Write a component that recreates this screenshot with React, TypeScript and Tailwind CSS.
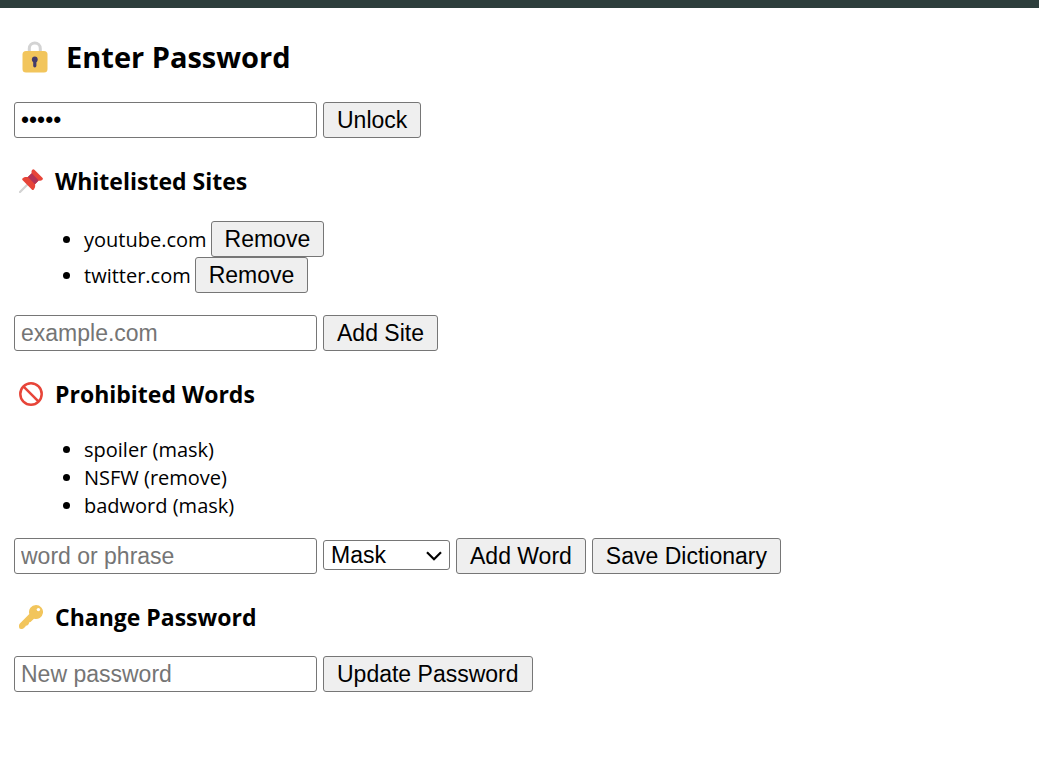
import { useState, type ComponentProps, type ReactNode } from 'react';

function LockIcon() {
  return (
    <svg viewBox="0 0 26 32" className="h-8 w-[26px]" aria-hidden="true">
      <path d="M7.300 12V7.500a5.500 5.500 0 0 1 11 0V12" fill="none" stroke="#d3d3d3" strokeWidth="3" />
      <rect x="0.500" y="10" width="25" height="21.500" rx="3.500" fill="#f2c55c" />
      <circle cx="12.800" cy="18.500" r="2.900" fill="#433b6b" />
      <path d="M12.800 19v5.800" stroke="#433b6b" strokeWidth="3.200" strokeLinecap="round" />
    </svg>
  );
}

function PinIcon() {
  return (
    <svg viewBox="0 0 24 24" className="size-6" aria-hidden="true">
      <path d="M1 23L11 13" stroke="#d3d3d3" strokeWidth="2.200" strokeLinecap="round" />
      <path d="M13.300.700a1.500 1.500 0 0 1 2.100 0L23.400 8.700a1.500 1.500 0 0 1 0 2.100c-1 1-2.500 1-3.700.700L16 15.300c.5 2 0 4-1.200 5.100a1.400 1.400 0 0 1-2 0L3.700 11.300a1.400 1.400 0 0 1 0-2C4.900 8 6.900 7.600 8.900 8.100l3.800-3.800c-.3-1.200-.4-2.600.6-3.600Z" fill="#e74539" />
      <path d="M12.700 4.300L19.700 11.500 16 15.300 8.900 8.100Z" fill="#b33356" />
    </svg>
  );
}

function ProhibitedIcon() {
  return (
    <svg viewBox="0 0 24 24" className="size-6" fill="none" stroke="#e74539" strokeWidth="2.500" aria-hidden="true">
      <circle cx="12" cy="12" r="10.700" />
      <path d="M4.400 4.400L19.600 19.600" />
    </svg>
  );
}

function KeyIcon() {
  return (
    <svg viewBox="0 0 24 24" className="size-6" aria-hidden="true">
      <path d="M17 0a7 7 0 0 0-6.700 9L.900 18.400A3 3 0 0 0 0 20.500V22a2 2 0 0 0 2 2h1a2.500 2.500 0 0 0 1.700-.7l1.600-1.600a1.500 1.500 0 0 0 .4-1l1.500-.2 1.600-1.600.2-1.500 1.500-.3 3.500-3.400A7 7 0 1 0 17 0Z" fill="#f2c55c" />
      <circle cx="19.400" cy="4.600" r="1.700" fill="#fff" />
    </svg>
  );
}

function Button({ children, ...props }: ComponentProps<'button'>) {
  return (
    <button
      type="button"
      className="h-9 rounded-[3px] border border-[#767676] bg-[#efefef] px-[13px] font-['Liberation_Sans',Arial,sans-serif] text-[23px] leading-8 whitespace-nowrap text-black hover:bg-[#e5e5e5]"
      {...props}
    >
      {children}
    </button>
  );
}

function TextField(props: ComponentProps<'input'>) {
  return (
    <input
      className="h-9 w-[303px] rounded-[3px] border border-[#767676] bg-white px-1.5 font-['Liberation_Sans',Arial,sans-serif] text-[23px] text-black placeholder:text-[#757575]"
      {...props}
    />
  );
}

function SectionTitle({ icon, children }: { icon: ReactNode; children: ReactNode }) {
  return (
    <h3 className="mt-[27px] flex items-center gap-3 pl-[5px] text-[23px] leading-8 font-bold">
      {icon}
      {children}
    </h3>
  );
}

export default function App() {
  const [sites, setSites] = useState(['youtube.com', 'twitter.com']);
  const [site, setSite] = useState('');
  const [words, setWords] = useState([
    { text: 'spoiler', action: 'mask' },
    { text: 'NSFW', action: 'remove' },
    { text: 'badword', action: 'mask' },
  ]);
  const [word, setWord] = useState('');
  const [action, setAction] = useState('mask');

  const addSite = () => {
    if (site.trim()) setSites([...sites, site.trim()]);
    setSite('');
  };
  const addWord = () => {
    if (word.trim()) setWords([...words, { text: word.trim(), action }]);
    setWord('');
  };

  return (
    <div className="min-h-screen bg-white font-['Segoe_UI','Open_Sans',sans-serif] text-black">
      <div className="h-2 bg-[#2d3e3c]" />
      <main className="px-3.5 pt-[29px] pb-8">
        <h2 className="flex items-center gap-[18px] pl-2 text-[29px] leading-10 font-bold">
          <LockIcon />
          Enter Password
        </h2>
        <div className="mt-[25px] flex flex-wrap gap-1.5">
          <TextField type="password" defaultValue="admin" aria-label="Password" />
          <Button>Unlock</Button>
        </div>

        <SectionTitle icon={<PinIcon />}>Whitelisted Sites</SectionTitle>
        <ul className="mt-6 list-disc pl-[70px] text-xl leading-7">
          {sites.map((name) => (
            <li key={name}>
              <div className="inline-flex items-baseline gap-1">
                {name}
                <Button onClick={() => setSites(sites.filter((s) => s !== name))}>Remove</Button>
              </div>
            </li>
          ))}
        </ul>
        <div className="mt-[22px] flex flex-wrap gap-1.5">
          <TextField type="text" placeholder="example.com" aria-label="Site" value={site} onChange={(e) => setSite(e.target.value)} />
          <Button onClick={addSite}>Add Site</Button>
        </div>

        <SectionTitle icon={<ProhibitedIcon />}>Prohibited Words</SectionTitle>
        <ul className="mt-[26px] list-disc pl-[70px] text-xl leading-7">
          {words.map((w) => (
            <li key={w.text}>{`${w.text} (${w.action})`}</li>
          ))}
        </ul>
        <div className="mt-[18px] flex flex-wrap items-center gap-1.5">
          <TextField type="text" placeholder="word or phrase" aria-label="Word or phrase" value={word} onChange={(e) => setWord(e.target.value)} />
          <div className="relative -mt-0.5">
            <select
              aria-label="Action"
              value={action}
              onChange={(e) => setAction(e.target.value)}
              className="block h-[30px] w-[127px] appearance-none rounded-[3px] border border-[#767676] bg-white pl-[7px] font-['Liberation_Sans',Arial,sans-serif] text-[23px] leading-7 text-black"
            >
              <option value="mask">Mask</option>
              <option value="remove">Remove</option>
            </select>
            <svg viewBox="0 0 16 10" className="pointer-events-none absolute top-[11px] right-2 h-2.5 w-4" fill="none" stroke="#000" strokeWidth="2.200" aria-hidden="true">
              <path d="M1 1.200L8 8.200 15 1.200" />
            </svg>
          </div>
          <Button onClick={addWord}>Add Word</Button>
          <Button>Save Dictionary</Button>
        </div>

        <SectionTitle icon={<KeyIcon />}>Change Password</SectionTitle>
        <div className="mt-[23px] flex flex-wrap gap-1.5">
          <TextField type="password" placeholder="New password" aria-label="New password" />
          <Button>Update Password</Button>
        </div>
      </main>
    </div>
  );
}
